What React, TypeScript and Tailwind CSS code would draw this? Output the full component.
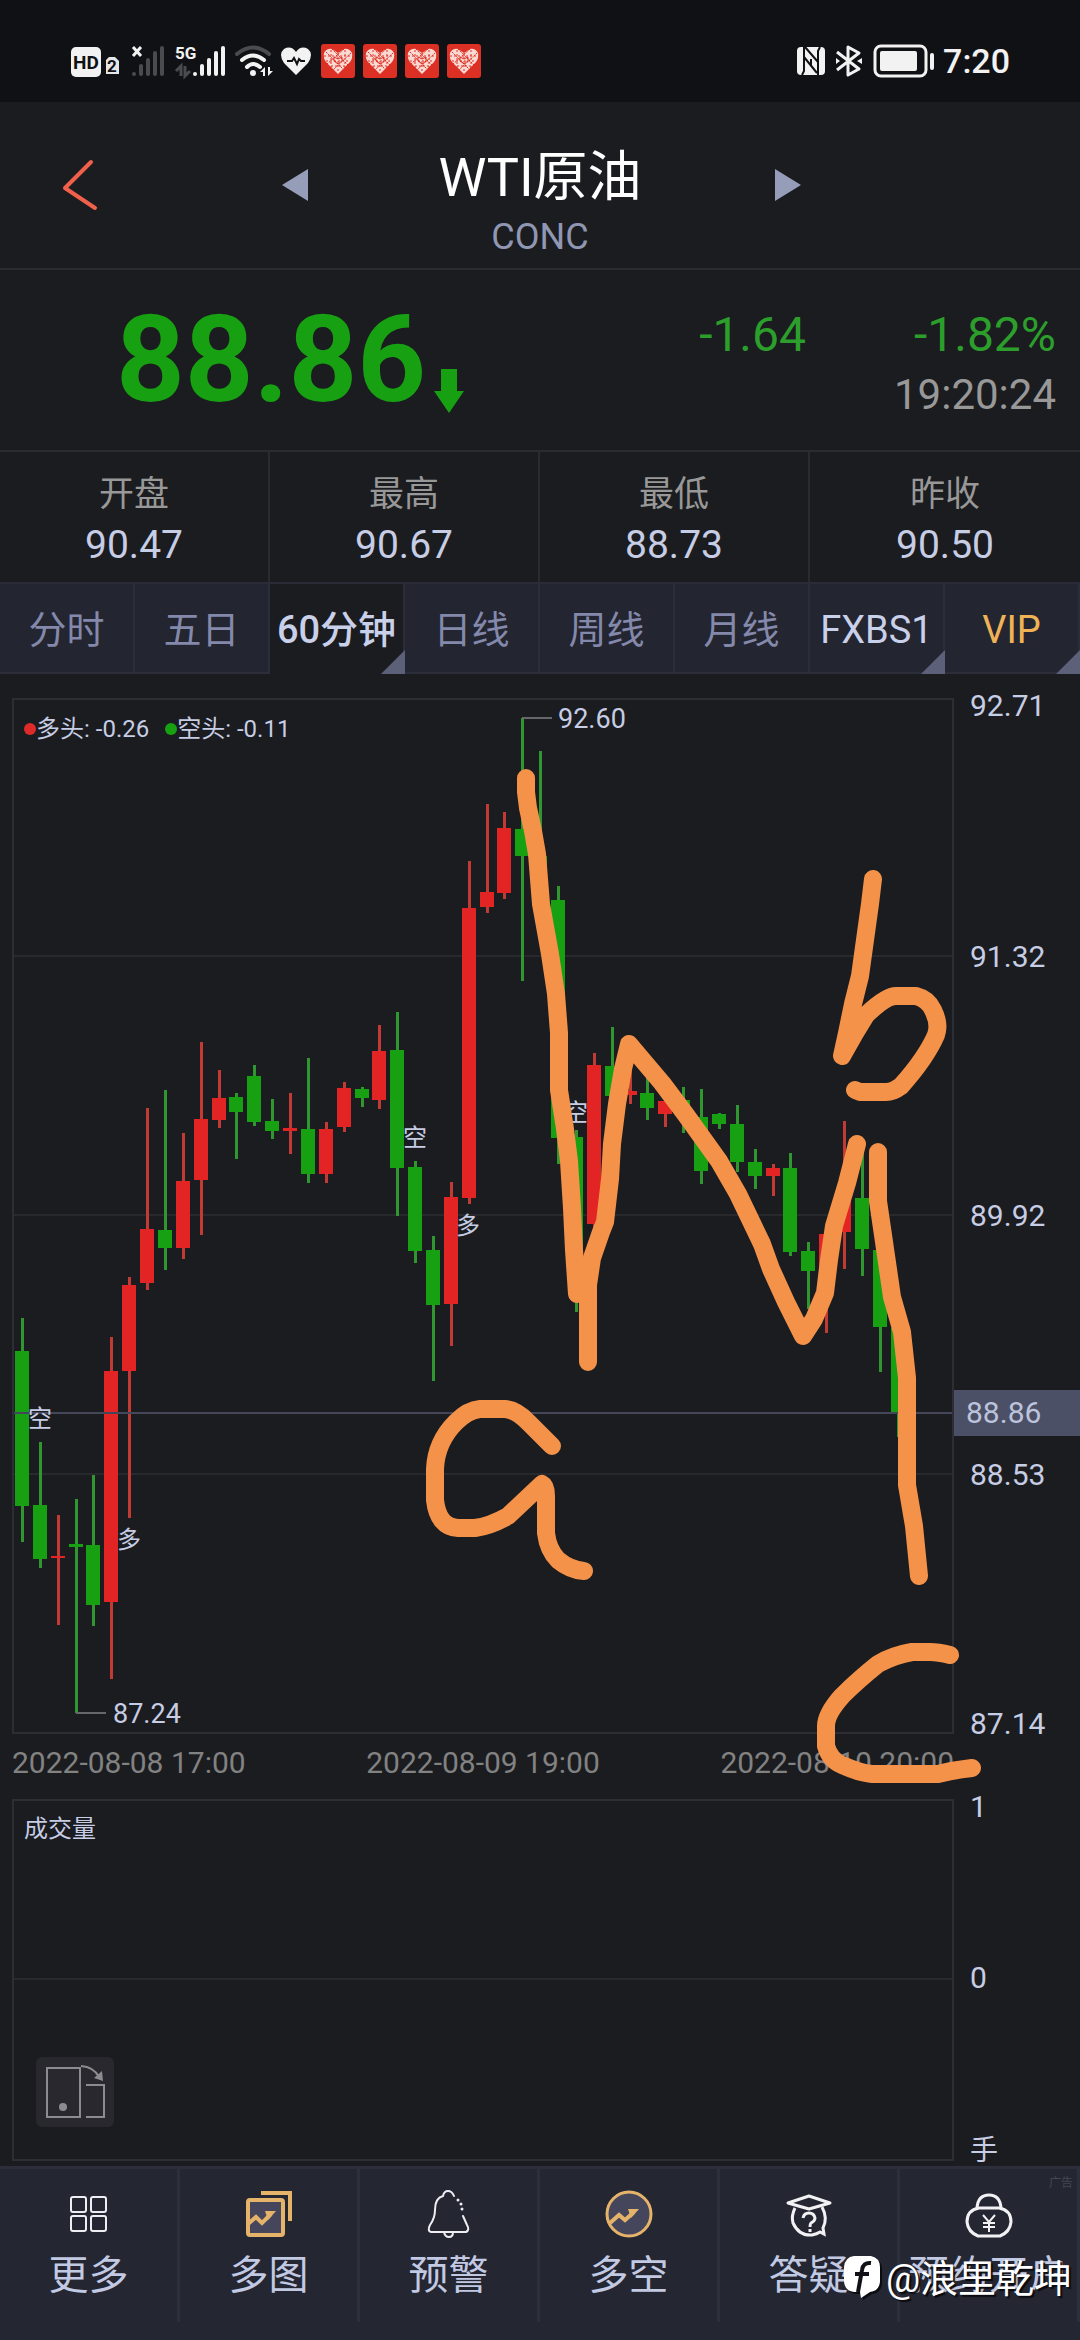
import React from "react";

type Tone = "up" | "down";
type Candle = [tone: Tone, high: number, top: number, bottom: number, low: number];

const RED = "#e32424";
const GREEN = "#17a012";
const RED_WICK = "#c23a34";
const GREEN_WICK = "#2f9630";

const u: Tone = "up";
const d: Tone = "down";

const candles: Candle[] = [
  [d, 1318, 1351, 1506, 1542],
  [d, 1442, 1505, 1559, 1568],
  [u, 1515, 1556, 1558, 1625],
  [d, 1499, 1544, 1547, 1713],
  [d, 1475, 1545, 1605, 1626],
  [u, 1337, 1371, 1602, 1679],
  [u, 1277, 1285, 1371, 1518],
  [u, 1108, 1229, 1283, 1290],
  [d, 1090, 1230, 1248, 1270],
  [u, 1133, 1181, 1248, 1259],
  [u, 1042, 1119, 1180, 1235],
  [u, 1070, 1098, 1120, 1128],
  [d, 1093, 1097, 1112, 1159],
  [d, 1065, 1076, 1122, 1126],
  [d, 1099, 1121, 1131, 1139],
  [u, 1093, 1128, 1131, 1154],
  [d, 1058, 1129, 1174, 1183],
  [u, 1122, 1129, 1174, 1183],
  [u, 1082, 1088, 1127, 1132],
  [d, 1087, 1089, 1098, 1107],
  [u, 1025, 1051, 1100, 1109],
  [d, 1012, 1050, 1168, 1216],
  [d, 1161, 1167, 1251, 1263],
  [d, 1236, 1250, 1305, 1381],
  [u, 1182, 1197, 1304, 1346],
  [u, 861, 908, 1198, 1204],
  [u, 804, 892, 907, 913],
  [u, 812, 828, 893, 899],
  [d, 718, 829, 856, 981],
  [d, 751, 856, 901, 905],
  [d, 886, 900, 1138, 1164],
  [d, 1130, 1137, 1250, 1312],
  [u, 1053, 1065, 1224, 1230],
  [d, 1027, 1066, 1096, 1104],
  [u, 1060, 1091, 1095, 1104],
  [d, 1076, 1093, 1108, 1120],
  [u, 1095, 1101, 1114, 1127],
  [d, 1087, 1100, 1117, 1133],
  [d, 1089, 1117, 1171, 1184],
  [d, 1113, 1114, 1124, 1129],
  [d, 1105, 1124, 1162, 1172],
  [d, 1149, 1162, 1176, 1189],
  [u, 1164, 1168, 1176, 1196],
  [d, 1153, 1168, 1252, 1256],
  [d, 1242, 1251, 1271, 1309],
  [u, 1226, 1234, 1270, 1333],
  [u, 1121, 1190, 1232, 1269],
  [d, 1145, 1198, 1249, 1276],
  [d, 1240, 1250, 1327, 1372],
  [d, 1320, 1328, 1412, 1437],
];

const signals: [string, number, number][] = [
  ["空", 28, 1427],
  ["多", 117, 1548],
  ["空", 403, 1146],
  ["多", 456, 1234],
  ["空", 564, 1121],
];

const strokes = [
  "M526 778 526 792 528 808 533 831 537 854 541 904 550 954 556 994 559 1033 559 1090 565 1129 569 1161 572 1208 574 1250 577 1294",
  "M588 1362 588 1285 592 1258 601 1232 605 1222 610 1179 612 1144 617 1104 623 1069 629 1044 662 1083 686 1115 719 1161 738 1194 762 1244 771 1269 786 1302 803 1336 814 1319 825 1293 829 1260 834 1226 847 1183 857 1144",
  "M878 1152 878 1201 883 1235 892 1297 902 1332 907 1378 907 1485 914 1526 919 1576",
  "M873 879 870 904 865 940 860 976 853 1004 847 1033 842 1056 855 1033 866 1015 Q886 996 896 996 H916 Q928 999 933 1010 Q940 1024 936 1035 Q926 1058 901 1086 Q893 1092 886 1092 H860 L855 1090",
  "M552 1446 529 1423 Q517 1410 505 1409 H480 Q468 1410 456 1422 Q436 1442 435 1469 V1500 Q438 1527 458 1528 H475 Q490 1526 508 1516 L525 1500 542 1484 Q546 1486 546 1496 V1533 Q548 1550 558 1560 Q570 1570 584 1571",
  "M950 1655 Q938 1652 930 1652 H912 Q894 1655 878 1664 Q858 1680 842 1696 Q826 1714 826 1726 V1746 Q830 1760 842 1765 Q860 1773 872 1774 H938 Q954 1770 972 1768",
];

const text = "font-[Roboto,'Noto_Sans_CJK_SC',sans-serif]";

function Bars({ x, color }: { x: number; color: string }) {
  return (
    <g stroke={color} strokeWidth="4" strokeLinecap="round">
      {[74, 66, 60, 53, 48].map((top, i) => (
        <path key={top} d={`M${x + i * 7} ${top}V74`} />
      ))}
    </g>
  );
}

function HeartTile() {
  return (
    <svg viewBox="0 0 34 34" className="h-[34px] w-[34px]" aria-hidden="true">
      <rect width="34" height="34" rx="3" fill="#dd3024" />
      <path d="M17 30 5 18Q2 14 3 9 6 4 11 5L17 9 23 5Q28 4 31 9 32 14 29 18Z" fill="#fbd9d3" />
      <g stroke="#dd3024" strokeWidth="1" fill="none">
        <path d="M5 8 24 27M11 5 28 22M23 5 6 20M30 9 12 26" strokeDasharray="2 1" />
        <path d="M3 12H31M5 17H29M10 22H24M10 6V24M24 6V24M17 9V29" strokeDasharray="2 2" />
        <path d="M13 13 17 15 21 13V17L17 20 13 17Z" />
      </g>
    </svg>
  );
}

function StatusBar() {
  return (
    <div className="flex h-[102px] items-center justify-between bg-[#101115] pt-5 pr-[70px] pl-[71px]">
      <div className="flex items-center gap-2" aria-hidden="true">
        <svg viewBox="71 44 52 34" className="h-[34px] w-[52px]">
          <rect x="71" y="47" width="30" height="30" rx="5" fill="#f2f2f2" />
          <text x="86" y="69" textAnchor="middle" fontSize="19" fontWeight="700" fontFamily="Roboto" fill="#101115">HD</text>
          <path d="M109 57H115L119 61V74H106V60Z" fill="#e6e6e6" />
          <text x="112" y="72" textAnchor="middle" fontSize="17" fontWeight="700" fontFamily="Roboto" fill="#101115">2</text>
        </svg>
        <svg viewBox="131 44 35 34" className="h-[34px] w-[35px]">
          <Bars x={134} color="#4a4b4e" />
          <path d="M133 47 141 56M141 47 133 56" stroke="#f2f2f2" strokeWidth="3" />
        </svg>
        <svg viewBox="174 44 53 34" className="h-[34px] w-[53px] overflow-visible">
          <text x="175" y="59" fontSize="17" fontWeight="700" fontFamily="Roboto" fill="#f2f2f2">5G</text>
          <Bars x={195} color="#f2f2f2" />
          <path d="M176 71 181 66V76M185 66V76L190 71" fill="none" stroke="#4a4b4e" strokeWidth="3" />
        </svg>
        <svg viewBox="235 44 38 34" className="h-[34px] w-[38px]">
          <g fill="none" strokeWidth="4" strokeLinecap="round">
            <path d="M237 54Q253 41 269 54" stroke="#4a4b4e" />
            <path d="M242 60Q253 51 264 60M247 67Q253 61 260 67" stroke="#f2f2f2" />
          </g>
          <circle cx="253" cy="73" r="3" fill="#f2f2f2" />
          <path d="M260 72 265 67V76H263V72ZM268 67V76L273 71H270V67Z" fill="#f2f2f2" />
        </svg>
        <svg viewBox="281 44 32 34" className="h-[34px] w-[32px]">
          <path d="M296 75 284 63Q278 54 284 49 291 45 296 52 301 45 308 49 314 54 308 63Z" fill="#f2f2f2" />
          <path d="M287 61H292L294 58 297 64 299 59 301 61H305" fill="none" stroke="#101115" strokeWidth="2" />
        </svg>
        <HeartTile />
        <HeartTile />
        <HeartTile />
        <HeartTile />
      </div>
      <div className="flex items-center gap-2">
        <svg viewBox="796 44 31 34" className="h-[34px] w-[31px]" aria-hidden="true">
          <rect x="797" y="47" width="28" height="28" rx="4" fill="#f2f2f2" />
          <path d="M804 47V71L802 75M818 75V51L820 47" fill="none" stroke="#101115" strokeWidth="2" />
          <path d="M805 47 818 62M804 57 817 73M811 59V66" fill="none" stroke="#101115" strokeWidth="2" />
        </svg>
        <svg viewBox="835 44 30 34" className="h-[34px] w-[30px]" aria-hidden="true">
          <path d="M837 52 859 69 848 75V47L859 53 837 70" fill="none" stroke="#f2f2f2" strokeWidth="3" strokeLinejoin="round" />
          <path d="M836 58 840 61 836 64ZM862 58 857 61 862 64Z" fill="#f2f2f2" />
        </svg>
        <svg viewBox="873 44 62 34" className="h-[34px] w-[62px]" aria-hidden="true">
          <rect x="875" y="46" width="51" height="30" rx="6" fill="none" stroke="#f2f2f2" strokeWidth="3" />
          <rect x="880" y="51" width="37" height="20" rx="2" fill="#f2f2f2" />
          <rect x="930" y="53" width="4" height="17" rx="2" fill="#f2f2f2" />
        </svg>
        <span className="text-[34px] leading-[34px] font-medium text-[#f2f2f2]">7:20</span>
      </div>
    </div>
  );
}

function Header() {
  return (
    <header className="grid grid-cols-[1fr_minmax(0,465px)_1fr] items-center border-b-2 border-[#2a2b30]">
      <div className="flex items-center justify-between pl-[60px]">
        <button type="button" aria-label="返回">
          <svg viewBox="60 159 40 54" className="h-[54px] w-10">
            <path d="M91 163 65 189 95 209" fill="none" stroke="#f0604a" strokeWidth="4" strokeLinecap="round" strokeLinejoin="round" />
          </svg>
        </button>
        <button type="button" aria-label="上一个">
          <svg viewBox="0 0 26 32" className="h-8 w-[26px]"><path d="M26 0V32L0 16Z" fill="#969db8" /></svg>
        </button>
      </div>
      <div className="pt-[46px] pb-[2px] text-center">
        <h1 className="text-[54px] leading-[60px] text-white">WTI原油</h1>
        <p className="text-[36px] leading-[58px] text-[#8f97b3]">CONC</p>
      </div>
      <div className="flex items-center pl-[2px]">
        <button type="button" aria-label="下一个">
          <svg viewBox="0 0 26 32" className="h-8 w-[26px]"><path d="M0 0V32L26 16Z" fill="#969db8" /></svg>
        </button>
      </div>
    </header>
  );
}

function Quote() {
  return (
    <section className="flex h-[182px] justify-between border-b-2 border-[#2a2b30] pr-6 pl-[116px]">
      <div className="flex items-center gap-2">
        <strong className="text-[120px] leading-[120px] font-bold text-[#17a012]">88.86</strong>
        <svg viewBox="0 0 30 44" className="mt-[62px] h-11 w-[30px]" aria-label="下跌">
          <path d="M7 0H23V22H30L15 44 0 22H7Z" fill={GREEN} />
        </svg>
      </div>
      <div className="flex flex-col items-end pt-[35px]">
        <div className="flex gap-[108px] text-[48px] leading-[60px] text-[#2c9e2c]">
          <span>-1.64</span>
          <span>-1.82%</span>
        </div>
        <time className="text-[42px] leading-[60px] text-[#989898]">19:20:24</time>
      </div>
    </section>
  );
}

function Stats() {
  const items = [
    ["开盘", "90.47"],
    ["最高", "90.67"],
    ["最低", "88.73"],
    ["昨收", "90.50"],
  ];
  return (
    <dl className="grid h-[132px] grid-cols-4 border-b-2 border-[#2a2b38] text-center">
      {items.map(([label, value]) => (
        <div key={label} className="border-r-2 border-[#2a2b30] pt-[18px] last:border-r-0">
          <dt className="text-[35px] leading-[50px] text-[#989898]">{label}</dt>
          <dd className="text-[39px] leading-[50px] text-[#c6cde4]">{value}</dd>
        </div>
      ))}
    </dl>
  );
}

function Tabs() {
  const tabs = [
    { name: "分时", style: "bg-[#232531] text-[#8489ab]", corner: false },
    { name: "五日", style: "bg-[#232531] text-[#8489ab]", corner: false },
    { name: "60分钟", style: "bg-[#1b1c1f] font-medium text-[#c9d0ea] border-b-[#1b1c1f]", corner: true },
    { name: "日线", style: "bg-[#232531] text-[#8489ab]", corner: false },
    { name: "周线", style: "bg-[#232531] text-[#8489ab]", corner: false },
    { name: "月线", style: "bg-[#232531] text-[#8489ab]", corner: false },
    { name: "FXBS1", style: "bg-[#232531] text-[#c9d0ea]", corner: true },
    { name: "VIP", style: "bg-[#232531] text-[#efb355]", corner: true },
  ];
  return (
    <nav className="grid h-[90px] grid-cols-8">
      {tabs.map((t) => (
        <button key={t.name} type="button" className={`relative border-r-2 border-b-2 border-[#2b2d3a] pt-1 text-[38px] leading-[50px] whitespace-nowrap ${t.style}`}>
          {t.name}
          {t.corner && (
            <svg viewBox="0 0 24 24" className="absolute -right-[2px] -bottom-[2px] h-6 w-6" aria-hidden="true">
              <path d="M24 0V24H0Z" fill="#5c6179" />
            </svg>
          )}
        </button>
      ))}
    </nav>
  );
}

function Candles() {
  return (
    <svg viewBox="14 700 938 1032" className="h-full w-full" role="img" aria-label="60分钟K线图">
      <path d="M14 956H952M14 1215H952M14 1474H952" stroke="#28292d" strokeWidth="2" />
      {candles.map(([tone, high, top, bottom, low], i) => {
        const x = Math.round(22 + i * 17.87);
        const body = tone === "up" ? RED : GREEN;
        const wick = tone === "up" ? RED_WICK : GREEN_WICK;
        return (
          <g key={i}>
            <rect x={x - 1} y={high} width="3" height={low - high} fill={wick} />
            <rect x={x - 7} y={top} width="14" height={bottom - top} fill={body} />
          </g>
        );
      })}
      <path d="M14 1413H952" stroke="#44465a" strokeWidth="2" />
      <path d="M522 718H552M76 1713H106" stroke="#66676b" strokeWidth="2" />
      <g fill="#c6cde4">
        <text x="558" y="728" fontSize="27">92.60</text>
        <text x="113" y="1723" fontSize="27">87.24</text>
        {signals.map(([label, x, y]) => (
          <text key={x} x={x} y={y} fontSize="24">{label}</text>
        ))}
      </g>
    </svg>
  );
}

function PriceChart() {
  return (
    <section className="relative pt-6 pb-[18px] pl-3">
      <div className="grid grid-cols-[minmax(0,1fr)_126px]">
        <div className="relative aspect-[942/1036] border-2 border-[#2c2d35]">
          <Candles />
          <div className="absolute top-[11px] left-[10px] flex gap-4 text-[24px] leading-9 text-[#c6cde4]">
            <span className="flex items-center">
              <i className="h-3 w-3 rounded-full bg-[#df2a2a]" />多头: -0.26
            </span>
            <span className="flex items-center">
              <i className="h-3 w-3 rounded-full bg-[#17a012]" />空头: -0.11
            </span>
          </div>
        </div>
        <div className="relative grid grid-rows-[1fr_2fr_2fr_2fr_1fr] text-[30px] leading-4 text-[#c6cde4]">
          <span className="pl-4">92.71</span>
          <span className="self-center pl-4">91.32</span>
          <span className="self-center pl-4">89.92</span>
          <span className="self-center pl-4">88.53</span>
          <span className="self-end pl-4 leading-5">87.14</span>
          <span className="absolute top-[69%] right-0 left-0 -translate-y-1/2 bg-[#4b5066] pl-3 leading-[46px] text-[#bcc3dc]">88.86</span>
        </div>
        <div className="mt-[11px] flex justify-between text-[30px] leading-9 text-[#828282]">
          <span>2022-08-08 17:00</span>
          <span>2022-08-09 19:00</span>
          <span>2022-08-10 20:00</span>
        </div>
      </div>
      <svg viewBox="0 674 1080 1125" className="pointer-events-none absolute inset-0 z-10 h-full w-full overflow-visible" aria-hidden="true">
        <g fill="none" stroke="#f5924a" strokeWidth="18" strokeLinecap="round" strokeLinejoin="round">
          {strokes.map((path) => (
            <path key={path} d={path} />
          ))}
        </g>
      </svg>
    </section>
  );
}

function VolumeChart() {
  return (
    <section className="grid grid-cols-[minmax(0,1fr)_126px] pb-[5px] pl-3">
      <div className="grid h-[362px] grid-rows-2 border-2 border-[#2c2d35]">
        <div className="border-b-2 border-[#28292d] pt-[10px] pl-[10px] text-[24px] leading-9 text-[#c6cde4]">成交量</div>
        <div className="flex items-end pb-8 pl-[22px]">
          <button type="button" aria-label="横屏" className="rounded-md bg-[#28282e]">
            <svg viewBox="36 2056 78 70" className="h-[70px] w-[78px]">
              <g fill="none" stroke="#8c8c90" strokeWidth="2">
                <rect x="47" y="2067" width="33" height="49" />
                <path d="M86 2084H104V2116H86M81 2065Q94 2066 99 2076" />
              </g>
              <circle cx="63" cy="2106" r="4" fill="#8c8c90" />
              <path d="M94 2077 102 2070 103 2080Z" fill="#8c8c90" />
            </svg>
          </button>
        </div>
      </div>
      <div className="flex flex-col justify-between pl-4 text-[30px] leading-4 text-[#c6cde4]">
        <span>1</span>
        <span>0</span>
        <span className="text-[28px] leading-5">手</span>
      </div>
    </section>
  );
}

const icons: Record<string, React.ReactNode> = {
  更多: (
    <g stroke="#eeeef2" strokeWidth="2">
      <rect x="7" y="8" width="15" height="15" rx="2" />
      <rect x="27" y="8" width="15" height="15" rx="2" />
      <rect x="7" y="27" width="15" height="15" rx="2" />
      <rect x="27" y="27" width="15" height="15" rx="2" />
    </g>
  ),
  多图: (
    <g stroke="#e5b36a" strokeWidth="4">
      <path d="M17 4H46V32" />
      <rect x="4" y="11" width="35" height="35" rx="2" fill="#45465c" />
      <path d="M4 35 12 28 18 34 27 25" />
      <path d="M21 22H32L24 31Z" fill="#e5b36a" stroke="none" />
    </g>
  ),
  预警: (
    <g stroke="#eeeef2" strokeWidth="2" strokeLinecap="round">
      <path d="M30 7Q28 2 24 2T19 7Q11 9 11 21 11 29 6 36 3 42 7 43H42Q46 41 43 36L39 27" />
      <path d="M34 11V11M37 15V15M38 20V20" strokeWidth="3" />
      <path d="M20 43Q21 48 25 48T29 43" />
    </g>
  ),
  多空: (
    <g stroke="#e5b36a" strokeWidth="3">
      <circle cx="25" cy="25" r="22" fill="#45465c" />
      <path d="M6 34 15 26 21 31 30 23" strokeWidth="4" />
      <path d="M24 20H35L27 29Z" fill="#e5b36a" stroke="none" />
    </g>
  ),
  答疑: (
    <g stroke="#f2f2f5" strokeWidth="2">
      <path d="M4 14 25 7 46 14 25 20Z" strokeWidth="3" strokeLinejoin="round" />
      <path d="M11 19Q7 27 9 34 15 47 28 46 33 45 36 43L40 45 39 39Q44 29 38 18" strokeWidth="3" />
      <path d="M19 29Q20 24 25 24T31 29Q31 32 27 34 26 35 26 38M26 40V43" strokeWidth="3" />
    </g>
  ),
  预约开户: (
    <g stroke="#f2f2f5" strokeWidth="3">
      <path d="M13 19Q14 6 25 6T37 19" />
      <path d="M15 19H35Q47 21 47 33 46 43 36 47H14Q4 43 3 33 3 21 15 19Z" strokeLinejoin="round" />
      <path d="M19 26 25 33 31 26M25 33V43M19 34H31M19 38H31" strokeWidth="2" />
    </g>
  ),
};

function BottomNav() {
  return (
    <nav className="relative grid grid-cols-6 border-t-[3px] border-[#2c2f3b] bg-[#242632] pb-[18px]">
      {Object.entries(icons).map(([name, icon]) => (
        <button key={name} type="button" className="relative flex h-[153px] flex-col items-center border-r-[3px] border-[#2d303c] pt-5 whitespace-nowrap text-[#c2c9e2]">
          <svg viewBox="0 0 50 50" className="h-[50px] w-[50px]" fill="none" aria-hidden="true">{icon}</svg>
          <span className="mt-3 text-[40px] leading-[50px]">{name}</span>
          {name === "预约开户" && <small className="absolute top-[6px] right-1 text-[12px] leading-4 text-[#454754]">广告</small>}
        </button>
      ))}
      <div className="pointer-events-none absolute right-2 bottom-9 z-10 flex items-center gap-[5px] text-white">
        <svg viewBox="0 0 37 46" className="h-[46px] w-[37px] overflow-visible" aria-hidden="true">
          <g transform="translate(2 2)" fill="#0b0c10">
            <path d="M10 0H27Q36 2 36 11V26Q35 35 26 36L17 42 16 36H10Q1 35 0 26V11Q1 1 10 0Z" />
          </g>
          <path d="M10 0H27Q36 2 36 11V26Q35 35 26 36L17 42 16 36H10Q1 35 0 26V11Q1 1 10 0Z" fill="white" />
          <path d="M27 7Q19 6 18 14L14 36M11 18H25" fill="none" stroke="#111217" strokeWidth="4" />
        </svg>
        <span className="text-[38px] leading-[50px] [text-shadow:2px_2px_1px_#0b0c10]">@浪里乾坤</span>
      </div>
    </nav>
  );
}

export default function App() {
  return (
    <main lang="zh-CN" className={`min-h-screen overflow-x-hidden bg-[#1b1c1f] ${text}`}>
      <StatusBar />
      <Header />
      <Quote />
      <Stats />
      <Tabs />
      <PriceChart />
      <VolumeChart />
      <BottomNav />
    </main>
  );
}
